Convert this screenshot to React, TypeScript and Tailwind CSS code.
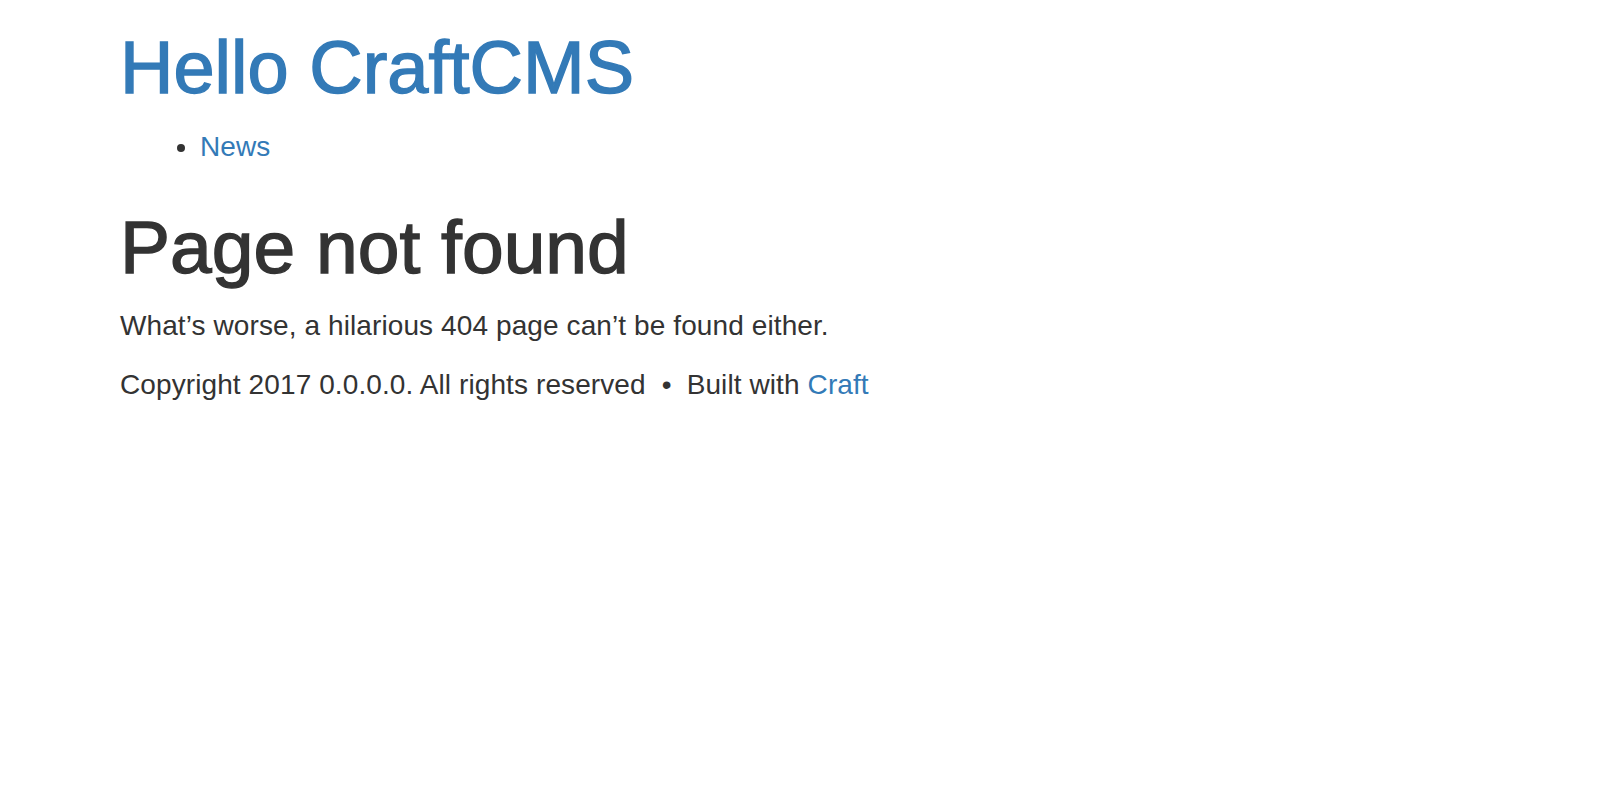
import React from "react";

const App = () => {
  return (
    <div
      className="min-h-screen bg-white text-[#333333] pl-[120px] pt-[28px]"
      style={{ fontFamily: '"Liberation Sans", Arial, sans-serif' }}
    >
      <h1 className="text-[74px] leading-[80px] text-[#337ab7] [-webkit-text-stroke:1.4px_#337ab7]">
        <a href="#">Hello CraftCMS</a>
      </h1>
      <ul className="list-disc pl-[80px] mt-[19px] text-[28px] leading-[40px] tracking-[0.1px]">
        <li>
          <a href="#" className="text-[#337ab7]">
            News
          </a>
        </li>
      </ul>
      <h1 className="mt-[40px] text-[75px] leading-[80px] [-webkit-text-stroke:1.4px_#333333]">
        Page not found
      </h1>
      <p className="mt-[19px] text-[28px] leading-[40px] tracking-[0.1px]">
        What’s worse, a hilarious 404 page can’t be found either.
      </p>
      <footer className="mt-[19px] text-[28px] leading-[40px] tracking-[0.1px]">
        Copyright 2017 0.0.0.0. All rights reserved
        <span className="ml-[16px] mr-[15px]">•</span>
        Built with{" "}
        <a href="#" className="text-[#337ab7]">
          Craft
        </a>
      </footer>
    </div>
  );
};

export default App;
